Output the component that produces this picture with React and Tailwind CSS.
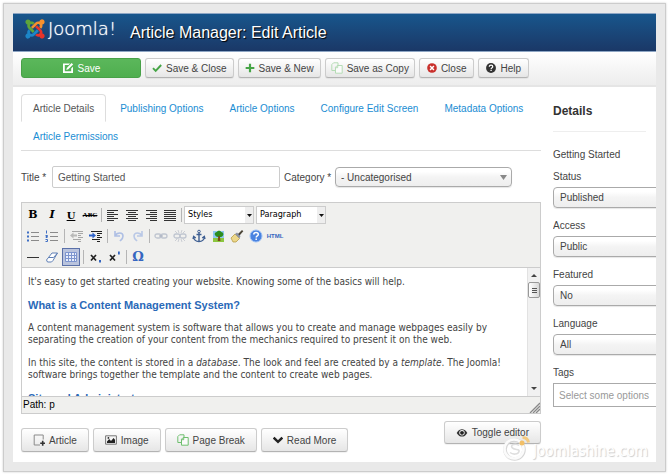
import React from "react";

const sans = "font-['Liberation_Sans',Arial,sans-serif]";

function JoomlaMark() {
  return (
    <svg viewBox="0 0 448 512" className="h-[22px] w-[20px] shrink-0" aria-hidden="true">
      <path fill="#5ea53a" d="M.6 92.1C.6 58.8 27.4 32 60.4 32c30 0 54.5 21.9 59.2 50.2 32.6-7.6 67.1.6 96.5 30l-44.3 44.3c-20.5-20.5-42.6-16.3-55.4-3.5-14.3 14.3-14.3 37.9 0 52.2l99.5 99.5-44 44.3c-87.7-87.2-49.7-49.7-99.8-99.7-26.8-26.5-35-64.8-24.8-98.9C20.4 144.6.6 120.7.6 92.1z" />
      <path fill="#f6902d" d="M130.1 208.5l44.3 44.3c10-10 89.7-89.7 99.7-99.8 14.3-14.3 37.6-14.3 51.9 0 12.8 12.8 17 35-3.5 55.4l44 44.3c31.2-31.2 38.5-67.6 28.9-101.2 29.2-4.1 51.9-29.2 51.9-59.5 0-33.2-26.8-60.1-59.8-60.1-30.3 0-55.4 22.5-59.5 51.6-33.8-9.9-71.7-1.5-98.3 25.1-18.3 19.1-71.1 71.5-99.6 99.9z" />
      <path fill="#e8332a" d="M396.4 360.7c8.2-32.7-.9-68.5-26.3-93.9-11.8-12.2 5 4.7-99.5-99.7l-44.3 44.3 99.7 99.7c14.3 14.3 14.3 37.6 0 51.9-12.8 12.8-35 17-55.4-3.5l-44 44.3c27.6 30.2 68 38.8 102.7 28 5.5 27.4 29.7 48.1 58.9 48.1 33 0 59.8-26.8 59.8-60.1 0-30.2-22.5-55-51.6-59.1z" />
      <path fill="#1c86c8" d="M312.1 307.6l-44-44.3c-87 86.4-50.4 50.4-99.7 99.8-14.3 14.3-37.6 14.3-51.9 0-13.1-13.4-16.9-35.3 3.2-55.4l-44-44.3c-30.2 30.2-38 65.2-29.5 98.3-26.7 6-46.2 29.9-46.2 58.2C0 453.2 26.8 480 59.8 480c28.6 0 52.5-19.8 58.6-46.7 32.7 8.2 68.5-.6 94.2-26 32.1-32 12.2-12.4 99.5-99.7z" />
    </svg>
  );
}

function Icon({ size = 12, children }) {
  return (
    <svg width={size} height={size} viewBox="0 0 12 12" fill="none" className="shrink-0" aria-hidden="true">
      {children}
    </svg>
  );
}

const SaveIcon = () => (
  <Icon>
    <path d="M1 1.500h7L6.500 3H2.800v6.200h6.400V6.500L11 4.800V11H1z" fill="#fff" />
    <path d="M4.300 8l.5-2L9.600 1l1.500 1.500L6.300 7.300z" fill="#fff" />
  </Icon>
);
const CheckIcon = () => (
  <Icon size={10}><path d="M1.200 6.200l3.200 3.200 6.600-7" stroke="#46a546" strokeWidth="2.300" /></Icon>
);
const PlusIcon = () => (
  <Icon size={10}><path d="M6 .8v10.400M.8 6h10.400" stroke="#46a546" strokeWidth="2.600" /></Icon>
);
const CopyIcon = ({ color = "#b5dcb5" }) => (
  <Icon>
    <path d="M4 8.500H.8V2.600L2.600.8H7v2.400" stroke={color} />
    <path d="M4.500 5.200l1.700-1.700h5v7.700H4.500z" stroke={color} fill="#fbfbfb" />
    <path d="M4.500 5.700h2.200V3.500" stroke={color} />
  </Icon>
);
const CloseIcon = () => (
  <Icon size={10}>
    <circle cx="6" cy="6" r="5.800" fill="#c9302c" />
    <path d="M3.700 3.700l4.600 4.600M8.300 3.700L3.700 8.300" stroke="#fff" strokeWidth="1.800" />
  </Icon>
);
const HelpIcon = () => (
  <Icon size={10}>
    <circle cx="6" cy="6" r="5.900" fill="#333" />
    <path d="M4 4.600C4 3.200 5 2.600 6.100 2.600S8.100 3.300 8.100 4.500C8.100 5.700 6.100 5.700 6.100 7.300" stroke="#fff" strokeWidth="1.500" />
    <path d="M5.300 8.200h1.600v1.500H5.300z" fill="#fff" />
  </Icon>
);
const ArticleIcon = () => (
  <Icon>
    <path d="M7 11H1.200V1h9v4.500" stroke="#8a8a8a" />
    <path d="M9.700 6.700v5M7.200 9.200h5" stroke="#333" strokeWidth="1.600" />
  </Icon>
);
const ImageIcon = () => (
  <Icon>
    <path d="M.6 1.800h10.800v8.400H.6z" stroke="#777" />
    <path d="M2 9V7.500l2.200-2.600 1.800 2L8.600 4 10 5.800V9z" fill="#222" />
    <circle cx="3.400" cy="3.900" r=".9" fill="#222" />
  </Icon>
);
const ChevronIcon = () => (
  <Icon size={10}><path d="M.8 3.200L6 8.200l5.200-5" stroke="#222" strokeWidth="3" /></Icon>
);
const EyeIcon = () => (
  <Icon>
    <path d="M.7 6C2.500 3 4.200 2.300 6 2.300S9.500 3 11.300 6C9.500 9 7.800 9.500 6 9.500S2.500 9 .7 6z" fill="#333" />
    <circle cx="6" cy="5.800" r="2.700" fill="#f4f4f4" />
    <circle cx="6" cy="5.800" r="1.900" fill="#222" />
  </Icon>
);

function Button({ icon, children, className = "" }) {
  return (
    <button
      type="button"
      className={`flex items-center justify-center gap-1 rounded-[3px] border border-[#ccc] border-b-[#b3b3b3] bg-linear-to-b from-white to-[#e6e6e6] whitespace-nowrap text-[#444] shadow-[0_1px_1px_rgba(0,0,0,0.06)] ${className}`}
    >
      {icon}
      {children}
    </button>
  );
}

function Sep({ className = "w-[3px]" }) {
  return <span className={`flex h-[14px] justify-center ${className}`}><span className="w-px bg-[#b5b5b5]" /></span>;
}

function Tool({ label, active, children }) {
  return (
    <button
      type="button"
      aria-label={label}
      className={`flex h-[18px] w-[18px] items-center justify-center ${active ? "border border-[#5a70a8] bg-[#b9c3dd]" : ""}`}
    >
      {children}
    </button>
  );
}

const G = ({ children }) => (
  <svg width="14" height="14" viewBox="0 0 14 14" fill="none" className="shrink-0" aria-hidden="true">{children}</svg>
);

const Align = ({ d }) => (
  <G><path d={d} stroke="#333" /></G>
);

function ListIcon({ numbered }) {
  return (
    <G>
      <path d="M5 3.500h8M5 7.500h8M5 11.500h8" stroke="#8a8a8a" />
      {numbered ? (
        <path d="M1.500 1.500v3M.5 6.500h2v1h-1.500v1h1.500M.5 10.500h2v2h-2" stroke="#3f6fc4" />
      ) : (
        <path d="M1 2.500h2v2H1zM1 6.500h2v2H1zM1 10.500h2v2H1z" fill="#3f6fc4" />
      )}
    </G>
  );
}

function IndentIcon({ faded }) {
  return (
    <G>
      <g opacity={faded ? 0.35 : 1}>
        <path d="M2 2.500h11M8 4.500h5M8 6.500h3M8 8.500h5M3 10.500h8M8 12.500h3" stroke="#222" />
        {faded ? <path d="M0 6.500l3.500-3v2H7v2H3.500v2z" fill="#555" /> : <path d="M7 6.500l-3.500-3v2H0v2h3.500v2z" fill="#2d62c9" />}
      </g>
    </G>
  );
}

function LinkIcon({ broken }) {
  return (
    <G>
      <rect x="1" y="5" width="6" height="4" rx="2" stroke="#bfc5d0" strokeWidth="1.300" />
      <rect x="7" y="5" width="6" height="4" rx="2" stroke="#bfc5d0" strokeWidth="1.300" />
      {broken ? <path d="M5 1l1 3M9 1L8 4M5 13l1-3M9 13l-1-3M2 2l2 2M12 2l-2 2M2 12l2-2M12 12l-2-2" stroke="#cbced4" /> : <path d="M5 7h4" stroke="#a5adbd" />}
    </G>
  );
}

function EditorSelect({ label, className }) {
  return (
    <span className={`relative flex h-[18px] border border-[#ccc] bg-white ${className}`}>
      <select aria-label={label} className="w-full appearance-none pl-[3px] font-['DejaVu_Sans_Condensed','DejaVu_Sans',sans-serif] text-[9px] text-black">
        <option>{label}</option>
      </select>
      <span className="pointer-events-none absolute inset-y-0 right-0 flex w-2 items-center justify-center bg-[#eee]">
        <svg width="5" height="3" viewBox="0 0 5 3" aria-hidden="true"><path d="M0 0h5L2.500 3z" fill="#111" /></svg>
      </span>
    </span>
  );
}

function EditorToolbar() {
  return (
    <div className="flex flex-col gap-[3px] border-b border-[#ccc] bg-[#f0f0ee] pt-[3px] pb-px pl-[2px]">
      <div className="flex items-center gap-px">
        <Tool label="Bold"><b className="font-['DejaVu_Serif',serif] text-[11px] text-black">B</b></Tool>
        <Tool label="Italic"><b className="font-['DejaVu_Serif',serif] text-[11px] text-black italic">I</b></Tool>
        <Tool label="Underline"><b className="font-['DejaVu_Serif',serif] text-[10px] text-black underline">U</b></Tool>
        <Tool label="Strikethrough"><b className="font-['Liberation_Serif',serif] text-[7px] text-black line-through">ABC</b></Tool>
        <Sep />
        <Tool label="Align left"><Align d="M1 2.500h11M1 4.500h7M1 6.500h11M1 8.500h7M1 10.500h11M1 12.500h7" /></Tool>
        <Tool label="Align center"><Align d="M1 2.500h12M3 4.500h8M1 6.500h12M3 8.500h8M1 10.500h12M3 12.500h8" /></Tool>
        <Tool label="Align right"><Align d="M2 2.500h11M6 4.500h7M2 6.500h11M6 8.500h7M2 10.500h11M6 12.500h7" /></Tool>
        <Tool label="Justify"><Align d="M1 2.500h12M1 4.500h12M1 6.500h12M1 8.500h12M1 10.500h12M1 12.500h12" /></Tool>
        <Sep />
        <EditorSelect label="Styles" className="mr-px w-[70px]" />
        <EditorSelect label="Paragraph" className="w-[70px]" />
      </div>
      <div className="flex items-center gap-px">
        <Tool label="Bullet list"><ListIcon /></Tool>
        <Tool label="Numbered list"><ListIcon numbered /></Tool>
        <Sep className="w-[5px]" />
        <Tool label="Outdent"><IndentIcon faded /></Tool>
        <Tool label="Indent"><IndentIcon /></Tool>
        <Sep />
        <Tool label="Undo"><G><path d="M3 2v5h5M3 7c2-4 8-4 8 0 0 3-2 4-3 5" stroke="#aebfe4" strokeWidth="1.600" /></G></Tool>
        <Tool label="Redo"><G><path d="M11 2v5H6M11 7C9 3 3 3 3 7c0 3 2 4 3 5" stroke="#b9c8e6" strokeWidth="1.600" /></G></Tool>
        <Sep />
        <Tool label="Insert link"><LinkIcon /></Tool>
        <Tool label="Unlink"><LinkIcon broken /></Tool>
        <Tool label="Anchor">
          <G><circle cx="7" cy="2.500" r="1.300" stroke="#3f5f92" /><path d="M7 4v8.500M4.500 5.500h5M1.500 8c.5 3 3 4.500 5.500 4.500S12 11 12.500 8M1 10l.7-2.500L3.800 9M13 10l-.7-2.500L10.200 9" stroke="#3f5f92" strokeWidth="1.400" /></G>
        </Tool>
        <Tool label="Insert image">
          <G><path d="M2 2h11v8H2z" fill="#8fc8f2" /><path d="M2 9h11v4H2z" fill="#8cc63f" /><path d="M4 6c-1-2 1-3 2-3 1-2 4-1 4 0 2 0 3 2 2 3.500-1 2-3 1.500-4 1.500S5 8 4 6z" fill="#2c8d1e" /><path d="M7.300 7h1.600l.6 5H6.700z" fill="#7a4b17" /></G>
        </Tool>
        <Tool label="Clean up">
          <G><path d="M1 9l4-4 4.500 4.500L6 13H3z" fill="#ecd78a" stroke="#b09437" strokeWidth=".7" /><path d="M5 5l2-1.500L10.500 7 9.500 9.500z" fill="#8b93a5" /><path d="M8 5l4-4 1.300 1.300L9.600 6.500z" fill="#4a4436" /></G>
        </Tool>
        <Tool label="Help">
          <G><circle cx="7" cy="7" r="6" fill="#4a83e0" stroke="#9cc0f4" /><path d="M4.800 5.500C4.800 4 6 3.500 7 3.500s2.300.6 2.300 2C9.300 7 7.200 6.900 7.200 8.500M7.200 9.500V11" stroke="#fff" strokeWidth="1.500" /></G>
        </Tool>
        <Tool label="Edit HTML source"><b className={`${sans} text-[6px] text-[#3566c0]`}>HTML</b></Tool>
      </div>
      <div className="flex items-center gap-px">
        <Tool label="Horizontal rule"><G><path d="M1 7.500h12" stroke="#333" /></G></Tool>
        <Tool label="Remove formatting">
          <G><path d="M1.500 10l5.500-7h5.500L8 10.500l-1.500 1.500h-4z" fill="#fff" stroke="#5f7fb5" /><path d="M3.500 7.500h5L12.500 3" stroke="#5f7fb5" /></G>
        </Tool>
        <Tool label="Toggle guidelines" active>
          <G><path d="M1.500 2.500h11v9h-11z" fill="#e8eefb" stroke="#7d95cf" /><path d="M2 5.500h10M2 8.500h10M4.500 3v8M7.500 3v8M10.500 3v8" stroke="#7d95cf" /></G>
        </Tool>
        <Sep className="w-[5px]" />
        <Tool label="Subscript"><G><path d="M2 5l5 5.500M7 5l-5 5.500" stroke="#222" strokeWidth="1.700" /><path d="M10 10h2v2.500h-2z" fill="#3566c0" /></G></Tool>
        <Tool label="Superscript"><G><path d="M2 5l5 5.500M7 5l-5 5.500" stroke="#222" strokeWidth="1.700" /><path d="M10 1.500h1.800v3H10z" fill="#3566c0" /></G></Tool>
        <Sep />
        <Tool label="Special character"><b className="font-['DejaVu_Serif',serif] text-[13px] text-[#3566c0]">Ω</b></Tool>
      </div>
    </div>
  );
}

function Scrollbar() {
  return (
    <div className="flex w-[13px] shrink-0 flex-col items-center border-l border-[#e2e2e2] bg-[#f1f1f1]" aria-hidden="true">
      <svg width="12" height="14" viewBox="0 0 12 14"><path d="M3 9h6L6 6z" fill="#444" /></svg>
      <span className="flex h-4 w-full flex-col items-center justify-center gap-px rounded-[2px] border border-[#999] bg-linear-to-r from-white to-[#d8d8d8]">
        <span className="h-px w-[5px] bg-[#555]" />
        <span className="h-px w-[5px] bg-[#555]" />
        <span className="h-px w-[5px] bg-[#555]" />
      </span>
      <svg width="12" height="14" viewBox="0 0 12 14" className="mt-auto"><path d="M3 5h6L6 8z" fill="#444" /></svg>
    </div>
  );
}

function Editor() {
  return (
    <div className="mt-[14px] border border-[#ccc]">
      <EditorToolbar />
      <div className="flex h-32 bg-white">
        <div className="flex-1 space-y-[11px] overflow-hidden pt-2 pl-[6px] font-['DejaVu_Sans_Condensed','DejaVu_Sans',sans-serif] text-[10px] leading-3 text-[#444]">
          <p>It's easy to get started creating your website. Knowing some of the basics will help.</p>
          <h2 className={`${sans} text-[11px] leading-3 font-bold text-[#2a69b8]`}>What is a Content Management System?</h2>
          <p className="max-w-[490px]">A content management system is software that allows you to create and manage webpages easily by separating the creation of your content from the mechanics required to present it on the web.</p>
          <p className="max-w-[490px]">In this site, the content is stored in a <em>database</em>. The look and feel are created by a <em>template</em>. The Joomla! software brings together the template and the content to create web pages.</p>
          <h2 className={`${sans} text-[11px] leading-3 font-bold text-[#2a69b8]`}>Site and Administrator</h2>
        </div>
        <Scrollbar />
      </div>
      <div className="flex items-end justify-between border-t border-[#ccc] bg-[#f0f0ee] pl-px">
        <span className="leading-4 text-black">Path: p</span>
        <svg width="11" height="11" viewBox="0 0 11 11" aria-hidden="true"><path d="M1 11L11 1M4 11l7-7M7 11l4-4" stroke="#888" strokeWidth="1.300" /></svg>
      </div>
    </div>
  );
}

const tabs = ["Article Details", "Publishing Options", "Article Options", "Configure Edit Screen", "Metadata Options", "Article Permissions"];

function Tabs() {
  return (
    <nav className="flex flex-wrap gap-x-[2px] border-b border-[#ddd]">
      {tabs.map((t, i) => (
        <a
          key={t}
          href="#"
          className={`h-7 rounded-t-[4px] border px-[11px] leading-7 whitespace-nowrap ${i === 0 ? "border-[#ddd] border-b-transparent text-[#555]" : "border-transparent text-[#1a8dd3]"}`}
        >
          {t}
        </a>
      ))}
    </nav>
  );
}

const selectLook =
  "appearance-none rounded-[4px] border border-[#aaa] bg-linear-to-b from-white from-20% via-[#f4f4f4] via-50% to-[#eee] text-[#444] shadow-[0_1px_1px_rgba(0,0,0,0.1)]";

function SideField({ id, label, value }) {
  return (
    <div className="mb-[7px]">
      <label htmlFor={id} className="block h-[21px] leading-[21px]">{label}</label>
      <select id={id} className={`h-[21px] w-[120px] pl-[6px] ${selectLook}`}>
        <option>{value}</option>
      </select>
    </div>
  );
}

function Sidebar() {
  return (
    <aside className="w-[103px] shrink-0 overflow-hidden pt-[10px]">
      <h3 className="text-[12px] leading-[14px] font-bold text-[#333]">Details</h3>
      <hr className="mt-[13px] mr-[10px] mb-4 border-[#eee]" />
      <p className="leading-[14px]">Getting Started</p>
      <div className="pt-1">
        <SideField id="status" label="Status" value="Published" />
        <SideField id="access" label="Access" value="Public" />
        <SideField id="featured" label="Featured" value="No" />
        <SideField id="language" label="Language" value="All" />
        <label htmlFor="tags" className="block h-[21px] leading-[21px]">Tags</label>
        <input id="tags" placeholder="Select some options" className="h-6 w-[120px] border border-[#aaa] bg-white pl-[5px] placeholder:text-[#999]" />
      </div>
    </aside>
  );
}

function Watermark() {
  return (
    <div className="pointer-events-none absolute right-2 bottom-0 flex items-end gap-px" aria-hidden="true">
      <svg width="30" height="28" viewBox="0 0 30 28" fill="none">
        <circle cx="12.500" cy="15.500" r="9.500" stroke="#d6d6d6" strokeWidth="3.600" />
        <circle cx="12" cy="15" r="9.500" stroke="#fbfbfb" strokeWidth="2.600" />
        <path d="M17 11.500c-3-2.500-9-1-7 2s8 1 7 4-6 3.500-9 1" stroke="#dedede" strokeWidth="1.600" />
        <circle cx="20" cy="9" r="2.500" fill="#f2bf66" />
        <path d="M20.500 3.500c3 0 5.500 2 6 5" stroke="#f4ca80" strokeWidth="3" />
      </svg>
      <span className="font-['DejaVu_Sans_Condensed','DejaVu_Sans',sans-serif] text-[15px] leading-[22px] text-white [text-shadow:1px_1px_1px_#ccc]">Joomlashine.com</span>
    </div>
  );
}

export default function App() {
  return (
    <div className={`bg-white p-[3px] text-[10px] text-[#444] ${sans}`}>
      <div className="border border-[#ccc] bg-[#e9e9e9] p-[9px] shadow-[0_0_2px_rgba(0,0,0,0.2)]">
        <div className="relative overflow-hidden bg-white">
          <header className="flex h-[39px] items-center border-y border-[#8ea6c4] bg-linear-to-b from-[#17568c] to-[#1a3867] pl-3">
            <div className="flex w-[105px] items-center gap-[3px] pb-2">
              <JoomlaMark />
              <span className="pt-px font-['DejaVu_Sans',sans-serif] text-[18px] leading-5 font-extralight text-white [text-shadow:0_0_1px_#fff]">Joomla!</span>
            </div>
            <h1 className="text-[16px] leading-5 text-white [text-shadow:1px_1px_1px_#000]">Article Manager: Edit Article</h1>
          </header>
          <div className="flex gap-1 border-b-2 border-[#e5e5e5] bg-linear-to-b from-white to-[#ededed] px-2 pt-[6px] pb-[7px]">
            <button type="button" className="flex h-5 w-[120px] items-center justify-center gap-1 rounded-[3px] border border-[#48a148] bg-linear-to-b from-[#5bb75b] to-[#4fae4f] text-white">
              <SaveIcon />
              Save
            </button>
            <Button className="h-5 px-[6px]" icon={<CheckIcon />}>Save &amp; Close</Button>
            <Button className="h-5 px-[6px]" icon={<PlusIcon />}>Save &amp; New</Button>
            <Button className="h-5 px-[5px]" icon={<CopyIcon />}>Save as Copy</Button>
            <Button className="h-5 px-[7px]" icon={<CloseIcon />}>Close</Button>
            <Button className="h-5 px-[7px]" icon={<HelpIcon />}>Help</Button>
          </div>
          <div className="flex gap-3 pt-[7px] pb-[10px] pl-2">
            <main className="min-w-0 flex-1">
              <Tabs />
              <div className="mt-[15px] flex items-center">
                <label htmlFor="title" className="w-[31px] whitespace-nowrap">Title *</label>
                <input id="title" defaultValue="Getting Started" className="h-[22px] w-[228px] rounded-[2px] border border-[#ccc] bg-white pl-[5px] text-[#555]" />
                <label htmlFor="category" className="ml-1 w-[51px] whitespace-nowrap">Category *</label>
                <span className="relative flex">
                  <select id="category" className={`h-5 w-[177px] pl-[5px] ${selectLook}`}>
                    <option>- Uncategorised</option>
                  </select>
                  <svg width="7" height="5" viewBox="0 0 7 5" className="pointer-events-none absolute top-2 right-[5px]" aria-hidden="true"><path d="M0 0h7L3.500 5z" fill="#888" /></svg>
                </span>
              </div>
              <Editor />
              <div className="mt-[7px] flex items-start gap-1">
                <div className="flex gap-1 pt-[7px]">
                  <Button className="h-6 px-[11px]" icon={<ArticleIcon />}>Article</Button>
                  <Button className="h-6 px-[11px]" icon={<ImageIcon />}>Image</Button>
                  <Button className="h-6 px-[11px]" icon={<CopyIcon color="#6fbf6f" />}>Page Break</Button>
                  <Button className="h-6 px-[11px]" icon={<ChevronIcon />}>Read More</Button>
                </div>
                <Button className="ml-auto h-[23px] px-[11px]" icon={<EyeIcon />}>Toggle editor</Button>
              </div>
            </main>
            <Sidebar />
          </div>
          <Watermark />
        </div>
      </div>
    </div>
  );
}
